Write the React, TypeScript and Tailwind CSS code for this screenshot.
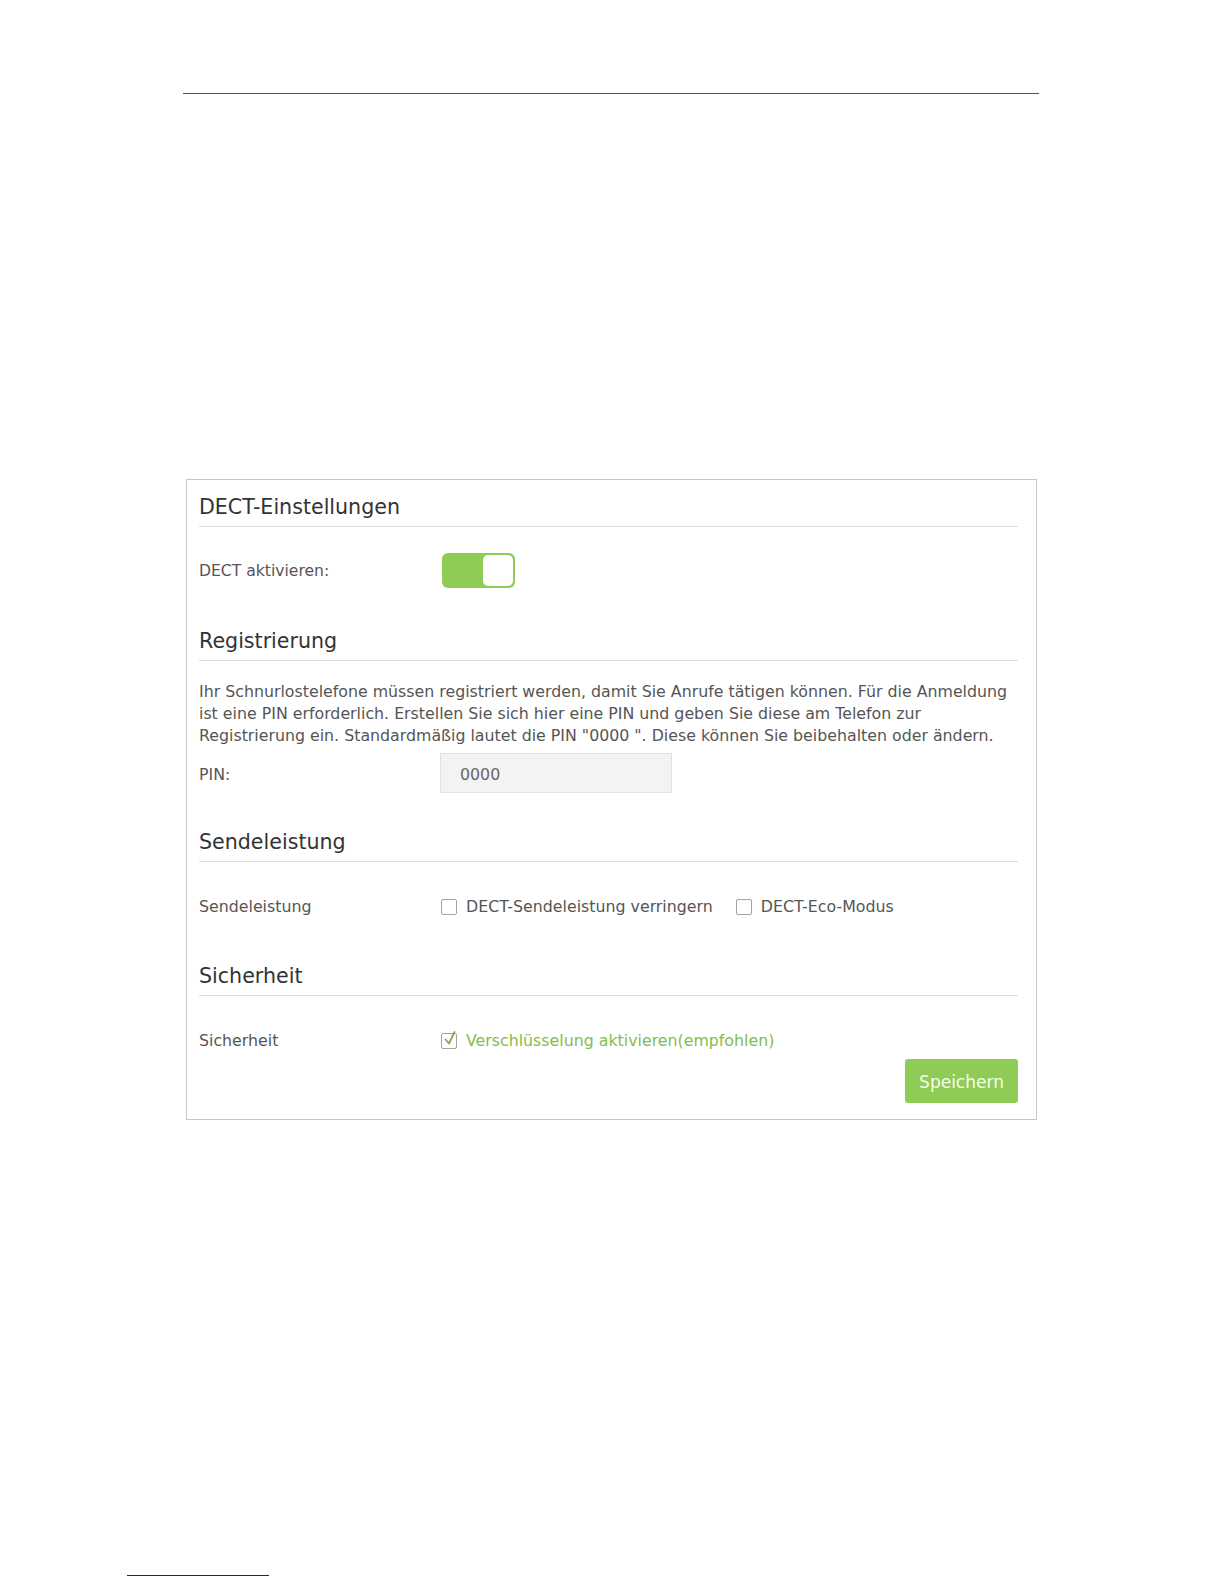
import React from "react";

function Heading({ children }: { children: React.ReactNode }) {
  return (
    <div className="border-b border-[#dcdcdc] pb-[5px] text-[20.6px] leading-[28px] text-[#333]">
      {children}
    </div>
  );
}

function Box({ checked }: { checked?: boolean }) {
  return (
    <span className="relative block h-[16px] w-[16px] shrink-0 rounded-[2px] border border-[#a3a3a3] bg-white">
      {checked && (
        <svg
          className="absolute left-[1px] top-[-4px]"
          width="14"
          height="17"
          viewBox="0 0 14 17"
          fill="none"
        >
          <path d="M2.5 9.5 L6 13.5 L11.5 2" stroke="#7fae52" strokeWidth="1.8" strokeLinecap="round" strokeLinejoin="round" />
        </svg>
      )}
    </span>
  );
}

export default function App() {
  return (
    <div className="flex h-[1584px] w-full flex-col bg-white font-['DejaVu_Sans',sans-serif]">
      <div className="h-[93px]" />
      <div className="ml-[183px] h-px w-[856px] bg-[#555]" />
      <div className="ml-[186px] mt-[385px] flex h-[641px] w-[851px] flex-col border border-[#c6c6c6] pb-[16px] pl-[12px] pr-[18px] pt-[13px]">
        <Heading>DECT-Einstellungen</Heading>
        <div className="mt-[26px] flex h-[35px] items-center">
          <div className="mt-[2px] w-[241px] text-[15.6px] text-[#555]">DECT aktivieren:</div>
          <div className="ml-[2px] flex h-[35px] w-[73px] items-center justify-end rounded-[6px] bg-[#8fcc55] pr-[2px]">
            <div className="h-[31px] w-[30px] rounded-[5px] bg-white" />
          </div>
        </div>

        <div className="mt-[39px]">
          <Heading>Registrierung</Heading>
        </div>
        <p className="mt-[20px] text-[15.8px] leading-[22px] text-[#555]">
          Ihr Schnurlostelefone müssen registriert werden, damit Sie Anrufe tätigen können. Für die Anmeldung
          <br />
          ist eine PIN erforderlich. Erstellen Sie sich hier eine PIN und geben Sie diese am Telefon zur
          <br />
          Registrierung ein. Standardmäßig lautet die PIN "0000 ". Diese können Sie beibehalten oder ändern.
        </p>
        <div className="mt-[6px] flex h-[40px] items-center">
          <div className="mt-[4px] w-[241px] text-[15.8px] text-[#555]">PIN:</div>
          <div className="flex h-[40px] w-[232px] items-center border border-[#e2e2e2] bg-[#f3f3f3] pl-[19px] pt-[3px] text-[15.8px] text-[#666]">
            0000
          </div>
        </div>

        <div className="mt-[35px]">
          <Heading>Sendeleistung</Heading>
        </div>
        <div className="mt-[35px] flex h-[20px] items-center text-[15.8px] text-[#555]">
          <div className="w-[242px]">Sendeleistung</div>
          <Box />
          <span className="ml-[9px]">DECT-Sendeleistung verringern</span>
          <span className="ml-[23px]">
            <Box />
          </span>
          <span className="ml-[9px]">DECT-Eco-Modus</span>
        </div>

        <div className="mt-[45px]">
          <Heading>Sicherheit</Heading>
        </div>
        <div className="mt-[35px] flex h-[20px] items-center text-[15.8px] text-[#555]">
          <div className="w-[242px]">Sicherheit</div>
          <Box checked />
          <span className="ml-[9px] text-[#84bd4c]">Verschlüsselung aktivieren(empfohlen)</span>
        </div>
        <div className="mt-[8px] flex justify-end">
          <button className="flex h-[44px] w-[113px] items-center justify-center rounded-[3px] bg-[#8fcc55] pt-[3px] text-[17px] text-[#f4fdea]">
            Speichern
          </button>
        </div>
      </div>
      <div className="ml-[127px] mt-[455px] h-px w-[142px] bg-[#1b1b8f]" />
    </div>
  );
}
